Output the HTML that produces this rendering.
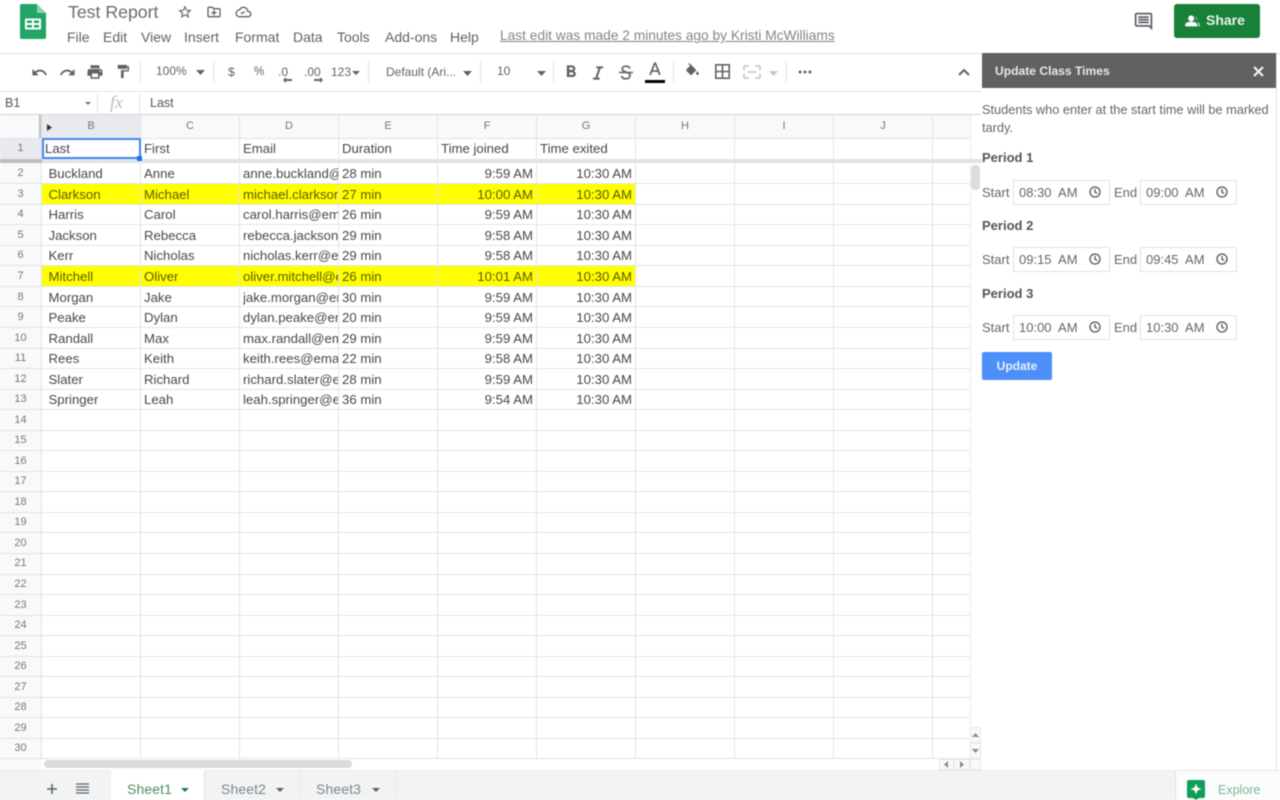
<!DOCTYPE html>
<html><head><meta charset="utf-8"><title>Test Report</title>
<style>
html,body{margin:0;padding:0;background:#fff}
#p{position:relative;width:1280px;height:800px;overflow:hidden;background:#fff;font-family:"Liberation Sans",sans-serif;color:#4d4d4d;filter:blur(.5px)}
#p div,#p span.a,#p svg{position:absolute}
.t{white-space:nowrap;line-height:16px}
.m{font-size:14px;color:#5f6368;top:29px}
.tb{font-size:12px;color:#5f6368;top:64px}
.ic{fill:#5f6368}
.sep{width:1px;background:#dfe1e4;top:62px;height:20px}
.hd{top:115px;height:23px;width:98px;text-align:center;font-size:11px;line-height:23px;color:#777}
.rn{left:0;width:41px;text-align:center;font-size:11px;color:#777;line-height:20px}
.r{left:42px;width:593px;height:20px;font-size:13.2px;line-height:22px;color:#484848}
.r span{position:absolute;top:0;white-space:nowrap;overflow:hidden;height:20px}
.y{background:#ff0;color:#5a5a00}
.b{left:6.5px}.c{left:102px}.d{left:201px;width:95px}.e{left:300px}.f{right:102px}.g{right:3px}
.h0{position:absolute;top:138px;font-size:13.2px;line-height:21px;color:#484848;white-space:nowrap}
.lb{font-size:13px;color:#666;white-space:nowrap;line-height:16px}
.pd{font-size:13px;font-weight:bold;color:#555;left:982px;line-height:16px;white-space:nowrap}
.box{width:95px;height:23px;border:1px solid #e2e2e2;box-sizing:content-box;font-size:13px;line-height:23px;color:#666;white-space:pre;text-indent:5px}
.box svg{right:7px;top:4px}
.tab{top:781px;font-size:14px;line-height:16px;color:#80868b;letter-spacing:.1px}
</style></head><body><div id="p">

<!-- logo -->
<svg style="left:20px;top:4px" width="26" height="35" viewBox="0 0 26 35"><path d="M2 0h15l9 9v24a2 2 0 0 1-2 2H2a2 2 0 0 1-2-2V2a2 2 0 0 1 2-2z" fill="#23a566"/><path d="M17 0l9 9h-9z" fill="#8ed1b1"/><path d="M5 14.500h16v11H5zM7 16.500v2.500h5v-2.500zM14 16.500v2.500h5v-2.500zM7 21v2.500h5V21zM14 21v2.500h5V21z" fill="#fff" fill-rule="evenodd"/></svg>

<div class="t" style="left:68px;top:3px;font-size:17.700px;line-height:18px;color:#686c70">Test Report</div>
<svg style="left:177px;top:4px" width="16" height="16" viewBox="0 0 24 24" class="ic"><path d="M22 9.240l-7.190-.62L12 2 9.190 8.630 2 9.240l5.460 4.730L5.820 21 12 17.270 18.180 21l-1.630-7.030L22 9.240zM12 15.400l-3.760 2.270 1-4.280-3.320-2.880 4.380-.38L12 6.100l1.710 4.040 4.380.38-3.320 2.880 1 4.280L12 15.400z"/></svg>
<svg style="left:206px;top:4px" width="16" height="16" viewBox="0 0 24 24" class="ic"><path d="M20 6h-8l-2-2H4c-1.100 0-2 .9-2 2v12c0 1.100.9 2 2 2h16c1.100 0 2-.9 2-2V8c0-1.100-.9-2-2-2zm0 12H4V6h5.170l2 2H20v10zm-9-1h2v-3h3v-2h-3V9h-2v3H8v2h3z"/></svg>
<svg style="left:235px;top:4px" width="17" height="16" viewBox="0 0 24 24" class="ic"><path d="M19.350 10.040A7.490 7.490 0 0 0 12 4C9.110 4 6.600 5.640 5.350 8.040A5.994 5.994 0 0 0 0 14c0 3.310 2.690 6 6 6h13c2.760 0 5-2.240 5-5 0-2.640-2.050-4.780-4.650-4.960zM19 18H6c-2.210 0-4-1.790-4-4s1.790-4 4-4h.71C7.370 7.690 9.490 6 12 6a5.500 5.500 0 0 1 5.500 5.500v.5H19c1.660 0 3 1.340 3 3s-1.340 3-3 3zM10 15.500l5-4-1-1-4 2.500-1.500-1-1 1z"/></svg>

<div class="t m" style="left:67px">File</div>
<div class="t m" style="left:103px">Edit</div>
<div class="t m" style="left:141px">View</div>
<div class="t m" style="left:184px">Insert</div>
<div class="t m" style="left:235px">Format</div>
<div class="t m" style="left:293px">Data</div>
<div class="t m" style="left:337px">Tools</div>
<div class="t m" style="left:385px">Add-ons</div>
<div class="t m" style="left:450px">Help</div>
<div class="t" style="left:500px;top:28px;font-size:13.750px;color:#80868b;text-decoration:underline">Last edit was made 2 minutes ago by Kristi McWilliams</div>

<svg style="left:1133px;top:11px" width="21" height="21" viewBox="0 0 24 24" class="ic"><path d="M22 4c0-1.100-.9-2-2-2H4c-1.100 0-2 .9-2 2v12c0 1.100.9 2 2 2h14l4 4V4zm-2 0v13.170L18.830 16H4V4h16zM6 12h12v2H6zm0-3h12v2H6zm0-3h12v2H6z"/></svg>
<div style="left:1174px;top:4px;width:86px;height:34px;background:#188038;border-radius:3px"></div>
<svg style="left:1184px;top:13px" width="17" height="16" viewBox="0 0 24 24" fill="#fff"><circle cx="10" cy="8" r="4.500"/><path d="M1 20v-2.500c0-3 5.500-4.500 9-4.500s9 1.500 9 4.500V20z"/><path d="M16 4a4.500 4.500 0 0 1 0 8c2-1 2-7 0-8zM19 13.500c2.500.7 4 2 4 4V20h-2.500v-3c0-1.300-.6-2.500-1.500-3.500z" opacity=".7"/></svg>
<div class="t" style="left:1206px;top:12px;font-size:14px;font-weight:bold;color:#e6f4ea">Share</div>

<!-- toolbar -->
<div style="left:0;top:53px;width:982px;height:1px;background:#e0e0e0"></div>
<div style="left:982px;top:53px;width:298px;height:1px;background:#e0e0e0"></div>
<div style="left:0;top:91px;width:982px;height:1px;background:#e3e3e3"></div>
<svg style="left:31px;top:64px" width="17" height="17" viewBox="0 0 24 24" class="ic"><path d="M12.500 8c-2.650 0-5.050.99-6.900 2.600L2 7v9h9l-3.620-3.620c1.390-1.160 3.160-1.880 5.120-1.880 3.540 0 6.550 2.310 7.600 5.500l2.370-.78C21.080 11.030 17.150 8 12.500 8z"/></svg>
<svg style="left:59px;top:64px" width="17" height="17" viewBox="0 0 24 24" class="ic"><path d="M18.400 10.600C16.550 8.990 14.150 8 11.500 8c-4.650 0-8.580 3.030-9.960 7.220L3.900 16c1.050-3.190 4.050-5.500 7.600-5.500 1.950 0 3.730.72 5.120 1.880L13 16h9V7l-3.600 3.600z"/></svg>
<svg style="left:86px;top:63px" width="18" height="18" viewBox="0 0 24 24" class="ic"><path d="M19 8H5c-1.660 0-3 1.340-3 3v6h4v4h12v-4h4v-6c0-1.660-1.340-3-3-3zm-3 11H8v-5h8v5zm3-7c-.55 0-1-.45-1-1s.45-1 1-1 1 .45 1 1-.45 1-1 1zm-1-9H6v4h12V3z"/></svg>
<svg style="left:115px;top:63px" width="16" height="17" viewBox="0 0 24 24" class="ic"><path d="M18 4V3c0-.55-.45-1-1-1H5c-.55 0-1 .45-1 1v4c0 .55.45 1 1 1h12c.55 0 1-.45 1-1V6h1v4H9v11c0 .55.45 1 1 1h2c.55 0 1-.45 1-1v-9h8V4h-3z"/></svg>
<div class="sep" style="left:140px"></div>
<div class="t tb" style="left:156px;top:63px">100%</div>
<svg style="left:196px;top:70px" width="9" height="5" class="ic"><path d="M0 0h9L4.500 5z"/></svg>
<div class="sep" style="left:213px"></div>
<div class="t tb" style="left:228px">$</div>
<div class="t tb" style="left:254px;font-size:11.500px">%</div>
<div class="t tb" style="left:278px">.0</div>
<svg style="left:283px;top:77px" width="9" height="6" class="ic"><path d="M0 3l3-3v2h6v2H3v2z"/></svg>
<div class="t tb" style="left:304px">.00</div>
<svg style="left:314px;top:77px" width="9" height="6" class="ic"><path d="M9 3L6 0v2H0v2h6v2z"/></svg>
<div class="t tb" style="left:331px">123</div>
<svg style="left:352px;top:71px" width="8" height="4" class="ic"><path d="M0 0h8L4 4z"/></svg>
<div class="sep" style="left:368px"></div>
<div class="t tb" style="left:386px">Default (Ari...</div>
<svg style="left:463px;top:71px" width="9" height="5" class="ic"><path d="M0 0h9L4.500 5z"/></svg>
<div class="sep" style="left:480px"></div>
<div class="t tb" style="left:497px;top:63px">10</div>
<svg style="left:537px;top:71px" width="9" height="5" class="ic"><path d="M0 0h9L4.500 5z"/></svg>
<div class="sep" style="left:553px"></div>
<svg style="left:561px;top:62px" width="20" height="20" viewBox="0 0 24 24" class="ic"><path d="M15.600 10.790c.97-.67 1.650-1.770 1.650-2.790 0-2.260-1.750-4-4-4H7v14h7.040c2.090 0 3.710-1.700 3.710-3.790 0-1.520-.86-2.820-2.150-3.420zM10 6.500h3c.83 0 1.500.67 1.500 1.500s-.67 1.500-1.500 1.500h-3v-3zm3.500 9H10v-3h3.500c.83 0 1.500.67 1.500 1.500s-.67 1.500-1.500 1.500z"/></svg>
<svg style="left:588px;top:63px" width="20" height="20" viewBox="0 0 24 24" class="ic"><path d="M10 4v2.500h2.600l-3.800 11H6V20h8v-2.500h-2.600l3.800-11H18V4z"/></svg>
<svg style="left:619px;top:65px" width="14" height="15" viewBox="0 0 14 15" fill="none" stroke="#5f6368" stroke-width="1.700"><path d="M11 3.500C10.500 2 9 1.200 7 1.200 4.800 1.200 3.200 2.300 3.200 4c0 3.500 7.800 2.500 7.800 6.500 0 2-1.800 3.300-4 3.300-2.300 0-4-1-4.500-2.800"/><path d="M0 7.500h14" stroke-width="1.500"/></svg>
<svg style="left:647px;top:62px" width="16" height="15" viewBox="0 0 18 16" class="ic"><path d="M8 0h2l5.500 14h-2.200l-1.200-3.300H5.900L4.700 14H2.500zM6.600 8.800h4.800L9 2.500z"/></svg>
<div style="left:645px;top:80px;width:20px;height:3px;background:#000"></div>
<div class="sep" style="left:673px"></div>
<svg style="left:684px;top:63px" width="17" height="17" viewBox="0 0 24 24" class="ic"><path d="M16.560 8.940L7.620 0 6.210 1.410l2.380 2.380-5.150 5.150c-.59.59-.59 1.540 0 2.120l5.500 5.500c.29.29.68.44 1.060.44s.77-.15 1.060-.44l5.500-5.500c.59-.58.59-1.530 0-2.120zM19 11.500s-2 2.170-2 3.500c0 1.100.9 2 2 2s2-.9 2-2c0-1.330-2-3.500-2-3.500z"/></svg>
<svg style="left:715px;top:64px" width="15" height="15" viewBox="0 0 15 15" fill="none" stroke="#5f6368" stroke-width="1.600"><rect x=".8" y=".8" width="13.400" height="13.400"/><path d="M7.500 1v13M1 7.500h13"/></svg>
<svg style="left:743px;top:65px" width="18" height="14" viewBox="0 0 18 14" fill="none" stroke="#bdc1c6" stroke-width="1.500"><path d="M1 5V1h5M12 1h5v4M1 9v4h5M12 13h5V9M5 7h8"/></svg>
<svg style="left:769px;top:71px" width="9" height="5" fill="#c4c7ca"><path d="M0 0h9L4.500 5z"/></svg>
<div class="sep" style="left:786px"></div>
<svg style="left:798px;top:70px" width="14" height="4" class="ic"><circle cx="2" cy="2" r="1.500"/><circle cx="7" cy="2" r="1.500"/><circle cx="12" cy="2" r="1.500"/></svg>
<svg style="left:958px;top:68px" width="12" height="8" fill="none" stroke="#5f6368" stroke-width="2"><path d="M1 7l5-5 5 5"/></svg>

<!-- formula bar -->
<div class="t" style="left:5px;top:95px;font-size:12.500px;color:#555">B1</div>
<svg style="left:85px;top:102px" width="6" height="3" fill="#777"><path d="M0 0h6L3 3z"/></svg>
<div style="left:97px;top:94px;width:1px;height:19px;background:#dfe1e4"></div>
<div class="t" style="left:110px;top:94px;font-family:'Liberation Serif',serif;font-style:italic;font-size:18px;color:#bdbdbd">fx</div>
<div style="left:139px;top:94px;width:1px;height:19px;background:#dfe1e4"></div>
<div class="t" style="left:150px;top:95px;font-size:12.500px;color:#555">Last</div>
<div style="left:0;top:114px;width:982px;height:1px;background:#d4d4d4"></div>

<!-- grid backgrounds -->
<div style="left:0;top:115px;width:970px;height:23px;background:#f8f9fa"></div>
<div style="left:0;top:138px;width:41px;height:620px;background:#f8f9fa"></div>
<div style="left:0;top:138px;width:41px;height:21px;background:#e8eaed"></div>
<div style="left:42px;top:115px;width:98px;height:23px;background:#e8eaed"></div>
<div style="left:39px;top:115px;width:3px;height:23px;background:#bdbdbd"></div>

<div class="r y" style="top:184px"></div>
<div class="r y" style="top:266px"></div>

<!-- grid lines -->
<svg style="left:0;top:0" width="982" height="770" stroke="#e2e3e4" stroke-width="1" shape-rendering="crispEdges">
<path d="M41.500 115V758M140.500 115V758M239.500 115V758M338.500 115V758M437.500 115V758M536.500 115V758M635.500 115V758M734.500 115V758M833.500 115V758M932.500 115V758"/>
<path d="M0 138.500H970M0 183.500H970M0 204.500H970M0 224.500H970M0 245.500H970M0 265.500H970M0 286.500H970M0 306.500H970M0 327.500H970M0 348.500H970M0 368.500H970M0 389.500H970M0 409.500H970M0 430.500H970M0 450.500H970M0 471.500H970M0 491.500H970M0 512.500H970M0 532.500H970M0 553.500H970M0 574.500H970M0 594.500H970M0 615.500H970M0 635.500H970M0 656.500H970M0 676.500H970M0 697.500H970M0 717.500H970M0 738.500H970M0 758.500H970"/>
</svg>

<!-- column headers -->
<svg style="left:47px;top:124px" width="5" height="7" fill="#333"><path d="M0 0l5 3.500L0 7z"/></svg>
<div class="hd" style="left:42px">B</div><div class="hd" style="left:141px">C</div><div class="hd" style="left:240px">D</div><div class="hd" style="left:339px">E</div><div class="hd" style="left:438px">F</div><div class="hd" style="left:537px">G</div><div class="hd" style="left:636px">H</div><div class="hd" style="left:735px">I</div><div class="hd" style="left:834px">J</div>

<!-- row numbers -->
<div class="rn" style="top:138px">1</div><div class="rn" style="top:163px">2</div><div class="rn" style="top:184px">3</div><div class="rn" style="top:204px">4</div><div class="rn" style="top:225px">5</div><div class="rn" style="top:245px">6</div><div class="rn" style="top:266px">7</div><div class="rn" style="top:287px">8</div><div class="rn" style="top:307px">9</div><div class="rn" style="top:328px">10</div><div class="rn" style="top:348px">11</div><div class="rn" style="top:369px">12</div><div class="rn" style="top:389px">13</div><div class="rn" style="top:410px">14</div><div class="rn" style="top:430px">15</div><div class="rn" style="top:451px">16</div><div class="rn" style="top:471px">17</div><div class="rn" style="top:492px">18</div><div class="rn" style="top:512px">19</div><div class="rn" style="top:533px">20</div><div class="rn" style="top:553px">21</div><div class="rn" style="top:574px">22</div><div class="rn" style="top:595px">23</div><div class="rn" style="top:615px">24</div><div class="rn" style="top:636px">25</div><div class="rn" style="top:656px">26</div><div class="rn" style="top:677px">27</div><div class="rn" style="top:697px">28</div><div class="rn" style="top:718px">29</div><div class="rn" style="top:738px">30</div>

<!-- header row -->
<span class="h0" style="left:45px">Last</span><span class="h0" style="left:144px">First</span><span class="h0" style="left:243px">Email</span><span class="h0" style="left:342px">Duration</span><span class="h0" style="left:441px">Time joined</span><span class="h0" style="left:540px">Time exited</span>

<!-- data -->
<div class="r" style="top:163px"><span class="b">Buckland</span><span class="c">Anne</span><span class="d">anne.buckland@email.com</span><span class="e">28 min</span><span class="f">9:59 AM</span><span class="g">10:30 AM</span></div>
<div class="r" style="top:184px;color:#5a5a00"><span class="b">Clarkson</span><span class="c">Michael</span><span class="d">michael.clarkson@email.com</span><span class="e">27 min</span><span class="f">10:00 AM</span><span class="g">10:30 AM</span></div>
<div class="r" style="top:204px"><span class="b">Harris</span><span class="c">Carol</span><span class="d">carol.harris@email.com</span><span class="e">26 min</span><span class="f">9:59 AM</span><span class="g">10:30 AM</span></div>
<div class="r" style="top:225px"><span class="b">Jackson</span><span class="c">Rebecca</span><span class="d">rebecca.jackson@email.com</span><span class="e">29 min</span><span class="f">9:58 AM</span><span class="g">10:30 AM</span></div>
<div class="r" style="top:245px"><span class="b">Kerr</span><span class="c">Nicholas</span><span class="d">nicholas.kerr@email.com</span><span class="e">29 min</span><span class="f">9:58 AM</span><span class="g">10:30 AM</span></div>
<div class="r" style="top:266px;color:#5a5a00"><span class="b">Mitchell</span><span class="c">Oliver</span><span class="d">oliver.mitchell@email.com</span><span class="e">26 min</span><span class="f">10:01 AM</span><span class="g">10:30 AM</span></div>
<div class="r" style="top:287px"><span class="b">Morgan</span><span class="c">Jake</span><span class="d">jake.morgan@email.com</span><span class="e">30 min</span><span class="f">9:59 AM</span><span class="g">10:30 AM</span></div>
<div class="r" style="top:307px"><span class="b">Peake</span><span class="c">Dylan</span><span class="d">dylan.peake@email.com</span><span class="e">20 min</span><span class="f">9:59 AM</span><span class="g">10:30 AM</span></div>
<div class="r" style="top:328px"><span class="b">Randall</span><span class="c">Max</span><span class="d">max.randall@email.com</span><span class="e">29 min</span><span class="f">9:59 AM</span><span class="g">10:30 AM</span></div>
<div class="r" style="top:348px"><span class="b">Rees</span><span class="c">Keith</span><span class="d">keith.rees@email.com</span><span class="e">22 min</span><span class="f">9:58 AM</span><span class="g">10:30 AM</span></div>
<div class="r" style="top:369px"><span class="b">Slater</span><span class="c">Richard</span><span class="d">richard.slater@email.com</span><span class="e">28 min</span><span class="f">9:59 AM</span><span class="g">10:30 AM</span></div>
<div class="r" style="top:389px"><span class="b">Springer</span><span class="c">Leah</span><span class="d">leah.springer@email.com</span><span class="e">36 min</span><span class="f">9:54 AM</span><span class="g">10:30 AM</span></div>

<!-- scrollbars -->
<div style="left:970px;top:115px;width:12px;height:655px;background:#fff;border-left:1px solid #ededed;box-sizing:border-box"></div>
<div style="left:971px;top:165px;width:9px;height:25px;background:#dadce0;border-radius:4px"></div>
<div style="left:970px;top:727px;width:11px;height:16px;background:#f8f9fa;border:1px solid #e8e8e8;box-sizing:border-box"></div>
<div style="left:970px;top:743px;width:11px;height:16px;background:#f8f9fa;border:1px solid #e8e8e8;box-sizing:border-box"></div>
<div style="left:970px;top:759px;width:11px;height:11px;background:#f8f9fa;border:1px solid #e8e8e8;box-sizing:border-box"></div>
<svg style="left:972px;top:733px" width="7" height="4" fill="#8a8a8a"><path d="M0 4h7L3.500 0z"/></svg>
<svg style="left:972px;top:749px" width="7" height="4" fill="#8a8a8a"><path d="M0 0h7L3.500 4z"/></svg>
<div style="left:0;top:759px;width:42px;height:11px;background:#f8f9fa"></div>
<div style="left:44px;top:760px;width:308px;height:8px;background:#d9dbdf;border-radius:4px"></div>
<div style="left:939px;top:759px;width:15px;height:11px;background:#f8f9fa;border:1px solid #e8e8e8;box-sizing:border-box"></div>
<div style="left:954px;top:759px;width:16px;height:11px;background:#f8f9fa;border:1px solid #e8e8e8;box-sizing:border-box"></div>
<svg style="left:944px;top:761px" width="4" height="7" fill="#8a8a8a"><path d="M4 0v7L0 3.500z"/></svg>
<svg style="left:960px;top:761px" width="4" height="7" fill="#8a8a8a"><path d="M0 0v7l4-3.500z"/></svg>

<!-- freeze bar -->
<div style="left:42px;top:159px;width:940px;height:4px;background:#dfe3ea"></div>
<div style="left:0;top:159px;width:42px;height:4px;background:#bdbdbd"></div>
<!-- selection -->
<div style="left:42px;top:138px;width:95px;height:17px;border:2px solid #4285f4;border-radius:1px"></div>
<div style="left:137px;top:156px;width:5px;height:5px;background:#1a73e8"></div>

<!-- sidebar -->
<div style="left:982px;top:53px;width:294px;height:35px;background:#616161"></div>
<div style="left:1276px;top:53px;width:1px;height:717px;background:#e6e6e6"></div>
<div class="t" style="left:995px;top:63px;font-size:12.100px;font-weight:bold;color:#e8e8e8">Update Class Times</div>
<svg style="left:1253px;top:66px" width="11" height="11" stroke="#f2f2f2" stroke-width="2.200"><path d="M1 1l9 9M10 1l-9 9"/></svg>
<div class="lb" style="left:982px;top:102px;font-size:12.780px">Students who enter at the start time will be marked</div>
<div class="lb" style="left:982px;top:120px;font-size:12.780px">tardy.</div>

<div class="pd" style="top:150px">Period 1</div>
<div class="lb" style="left:982px;top:185px">Start</div>
<div class="box" style="left:1013px;top:180px">08:30  AM<svg width="14" height="14" viewBox="0 0 14 14" fill="none" stroke="#555" stroke-width="1.300"><circle cx="7" cy="7" r="5"/><path d="M7 4v3.200l2.200 1.200"/></svg></div>
<div class="lb" style="left:1114px;top:185px">End</div>
<div class="box" style="left:1140px;top:180px">09:00  AM<svg width="14" height="14" viewBox="0 0 14 14" fill="none" stroke="#555" stroke-width="1.300"><circle cx="7" cy="7" r="5"/><path d="M7 4v3.200l2.200 1.200"/></svg></div>

<div class="pd" style="top:218px">Period 2</div>
<div class="lb" style="left:982px;top:252px">Start</div>
<div class="box" style="left:1013px;top:247px">09:15  AM<svg width="14" height="14" viewBox="0 0 14 14" fill="none" stroke="#555" stroke-width="1.300"><circle cx="7" cy="7" r="5"/><path d="M7 4v3.200l2.200 1.200"/></svg></div>
<div class="lb" style="left:1114px;top:252px">End</div>
<div class="box" style="left:1140px;top:247px">09:45  AM<svg width="14" height="14" viewBox="0 0 14 14" fill="none" stroke="#555" stroke-width="1.300"><circle cx="7" cy="7" r="5"/><path d="M7 4v3.200l2.200 1.200"/></svg></div>

<div class="pd" style="top:286px">Period 3</div>
<div class="lb" style="left:982px;top:320px">Start</div>
<div class="box" style="left:1013px;top:315px">10:00  AM<svg width="14" height="14" viewBox="0 0 14 14" fill="none" stroke="#555" stroke-width="1.300"><circle cx="7" cy="7" r="5"/><path d="M7 4v3.200l2.200 1.200"/></svg></div>
<div class="lb" style="left:1114px;top:320px">End</div>
<div class="box" style="left:1140px;top:315px">10:30  AM<svg width="14" height="14" viewBox="0 0 14 14" fill="none" stroke="#555" stroke-width="1.300"><circle cx="7" cy="7" r="5"/><path d="M7 4v3.200l2.200 1.200"/></svg></div>

<div style="left:982px;top:352px;width:70px;height:28px;background:#4d8ff8;border-radius:2px;color:#e8f0fe;font-size:12px;font-weight:bold;text-align:center;line-height:28px">Update</div>

<!-- bottom bar -->
<div style="left:0;top:770px;width:1280px;height:30px;background:#f1f3f4;border-top:1px solid #e8eaed;box-sizing:border-box"></div>
<svg style="left:46px;top:783px" width="12" height="12" fill="none" stroke="#5f6368" stroke-width="1.600"><path d="M6 1v10M1 6h10"/></svg>
<svg style="left:76px;top:783px" width="13" height="12" fill="none" stroke="#5f6368" stroke-width="1.300"><path d="M0 1h13M0 4h13M0 7h13M0 10h13"/></svg>
<div style="left:111px;top:770px;width:93px;height:30px;background:#fff"></div>
<div style="left:204px;top:770px;width:1px;height:30px;background:#dfe1e4"></div>
<div style="left:300px;top:771px;width:1px;height:29px;background:#e3e5e8"></div>
<div style="left:396px;top:771px;width:1px;height:29px;background:#e3e5e8"></div>
<div class="t tab" style="left:127px;color:#4f8f64">Sheet1</div>
<svg style="left:181px;top:788px" width="8" height="4" fill="#188038"><path d="M0 0h8L4 4z"/></svg>
<div class="t tab" style="left:221px">Sheet2</div>
<svg style="left:276px;top:788px" width="8" height="4" fill="#5f6368"><path d="M0 0h8L4 4z"/></svg>
<div class="t tab" style="left:316px">Sheet3</div>
<svg style="left:372px;top:788px" width="8" height="4" fill="#5f6368"><path d="M0 0h8L4 4z"/></svg>

<div style="left:1175px;top:771px;width:105px;height:29px;background:#fbfcfc;border-left:1px solid #dfe1e4;box-sizing:border-box"></div>
<svg style="left:1187px;top:780px" width="18" height="20" viewBox="0 0 18 20"><path d="M2 0h14a2 2 0 0 1 2 2v14a2 2 0 0 1-2 2h-4l-3 2-3-2H2a2 2 0 0 1-2-2V2a2 2 0 0 1 2-2z" fill="#0f9d58"/><path d="M9 3.500l1.500 4 4 1.500-4 1.500-1.500 4-1.500-4-4-1.500 4-1.500z" fill="#fff"/></svg>
<div class="t" style="left:1218px;top:782px;font-size:12.500px;color:#7fb594">Explore</div>

</div></body></html>
